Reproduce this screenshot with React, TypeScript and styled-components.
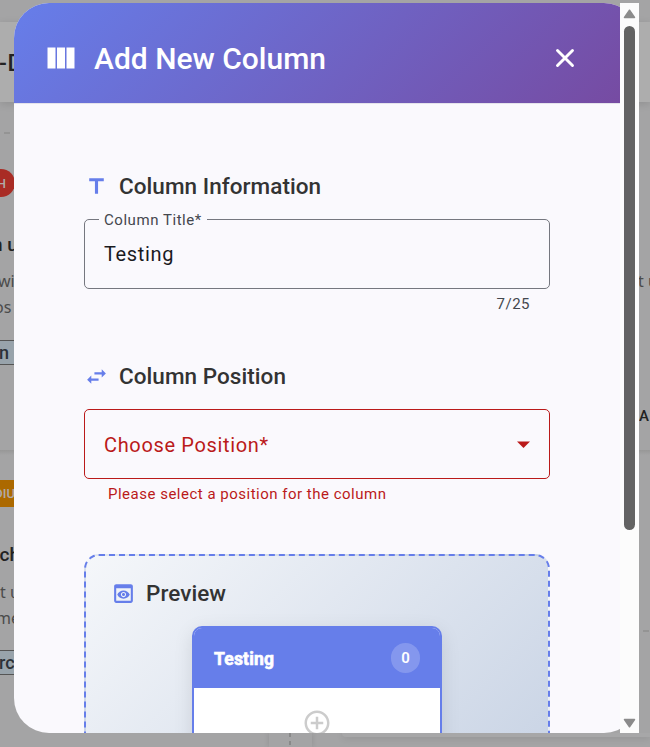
import React from "react";
import styled, { createGlobalStyle } from "styled-components";

const Global = createGlobalStyle`
  * { box-sizing: border-box; }
  body { margin: 0; overflow: hidden; background: #a4a4a5; font-family: Roboto, "Liberation Sans", sans-serif; }
`;

const Stage = styled.div`
  position: relative;
  width: 650px;
  height: 747px;
  overflow: hidden;
  padding: 3px 0 0 14px;
`;

/* Dimmed board behind the dialog */
const Board = styled.div`
  position: absolute;
  inset: 0;
  display: grid;
  grid-template-columns: 14px 625px 11px;
  grid-template-rows: 22px 80px 631px 14px;
  background: #a4a4a5;
`;
const Toolbar = styled.div`
  grid-column: 1 / -1;
  grid-row: 2;
  background: #adadad;
  box-shadow: 0 2px 8px rgba(0, 0, 0, 0.12);
  color: #232323;
  font-size: 23px;
  font-weight: 500;
  line-height: 83px;
  text-indent: -1px;
  letter-spacing: 0.6px;
  white-space: nowrap;
`;
const Strip = styled.div<{ $col: number }>`
  grid-column: ${(p) => p.$col};
  grid-row: 3;
  overflow: hidden;
  white-space: nowrap;
  display: flex;
  flex-direction: column;
`;
const Dash = styled.div<{ $top: number }>`
  flex: none;
  height: 2px;
  margin-top: ${(p) => p.$top}px;
  margin-left: 4px;
  width: 6px;
  background: #949494;
`;
const Tag = styled.div<{ $top: number; $round?: boolean }>`
  flex: none;
  align-self: flex-start;
  display: flex;
  justify-content: flex-end;
  align-items: center;
  margin-top: ${(p) => p.$top}px;
  width: ${(p) => (p.$round ? 15 : 20)}px;
  height: ${(p) => (p.$round ? 28 : 27)}px;
  padding-right: ${(p) => (p.$round ? 9 : 5)}px;
  border-radius: ${(p) => (p.$round ? "0 14px 14px 0" : "0")};
  background: ${(p) => (p.$round ? "#a92c25" : "#ac6900")};
  color: #b0aaa8;
  font-size: 13px;
  font-weight: 500;
`;
const Text = styled.div<{ $top: number; $size: number; $bold?: boolean; $shift?: number }>`
  flex: none;
  height: 26px;
  line-height: 26px;
  margin-top: ${(p) => p.$top}px;
  margin-left: ${(p) => p.$shift ?? 0}px;
  font-family: ${(p) => (p.$bold ? "Roboto" : '"Noto Sans"')}, sans-serif;
  font-size: ${(p) => p.$size}px;
  font-weight: ${(p) => (p.$bold ? 500 : 400)};
  color: ${(p) => (p.$bold ? "#222" : "#4b4b4b")};
`;
const Chip = styled(Text)`
  height: 25px;
  line-height: 23px;
  background: #98a3ab;
  border: solid #555;
  border-width: 1px 0;
  color: #2c3137;
`;
const Rule = styled.div<{ $top: number }>`
  flex: none;
  height: 5px;
  margin-top: ${(p) => p.$top}px;
  background: linear-gradient(#979797, #a4a4a5);
`;
const NextRow = styled.div`
  grid-column: 1 / -1;
  grid-row: 4;
  display: grid;
  grid-template-columns: 269px 43px 30px 1fr;
  overflow: hidden;
`;
const ColumnGap = styled.div`
  background: repeating-linear-gradient(#898989 0 4px, transparent 4px 8px) 20px 0 / 2px 100% no-repeat;
  box-shadow: -2px 0 4px rgba(0, 0, 0, 0.06), 2px 0 4px rgba(0, 0, 0, 0.06);
`;
const NextCard = styled.div`
  grid-column: 4;
  height: 4px;
  background: #a7a7a8;
  border-radius: 0 0 0 6px;
  box-shadow: 0 1px 7px rgba(0, 0, 0, 0.13);
`;

const Dialog = styled.div`
  position: relative;
  display: flex;
  width: 625px;
  height: 730px;
`;
const Surface = styled.section`
  width: 625px;
  height: 730px;
  padding-right: 19px;
  overflow: hidden;
  border-radius: 35px;
  background: #faf9fd;
`;
const Header = styled.header`
  display: flex;
  align-items: center;
  height: 100px;
  padding: 10px 39px 0 29px;
  color: #fff;
  background: linear-gradient(135deg, #667eea 0%, #764ba2 100%);
`;
const Title = styled.h1`
  flex: 1;
  margin: 2px 0 0 15px;
  font-size: 30px;
  font-weight: 500;
  line-height: 40px;
  white-space: nowrap;
`;
const CloseButton = styled.button`
  display: flex;
  align-items: center;
  justify-content: center;
  width: 32px;
  height: 32px;
  padding: 0;
  border: 0;
  background: none;
  color: #fff;
`;
const Body = styled.div`
  padding: 66px 70px 0;
  border-top: 1px solid #e4e3eb;
`;
const Heading = styled.h2`
  display: flex;
  align-items: center;
  gap: 10px;
  height: 33px;
  margin: 0;
  color: #333;
  font-size: 22.5px;
  font-weight: 500;
  white-space: nowrap;
  svg { color: #667eea; }
`;
const HeadingLabel = styled.span`
  padding-bottom: 2px;
  letter-spacing: 0.05px;
`;
const Field = styled.fieldset<{ $error?: boolean }>`
  display: flex;
  align-items: center;
  justify-content: space-between;
  min-width: 0;
  margin: 0;
  height: ${(p) => (p.$error ? 70 : 80)}px;
  padding: ${(p) => (p.$error ? "2px 19px 0" : "0 19px 10px")};
  border: 1px solid ${(p) => (p.$error ? "#ba1a1a" : "#75777f")};
  border-radius: 5px;
  color: ${(p) => (p.$error ? "#ba1a1a" : "#1a1b1f")};
  font-size: 20px;
  letter-spacing: 0.65px;
  line-height: 30px;
  svg { margin: -2px 0 0 0; }
`;
const Legend = styled.legend`
  height: 20px;
  margin-left: -5px;
  padding: 0 5px;
  color: #44474e;
  font-size: 15px;
  letter-spacing: 0.55px;
  line-height: 22px;
`;
const Hint = styled.div<{ $error?: boolean }>`
  height: 20px;
  margin-top: 5px;
  padding: ${(p) => (p.$error ? "0 24px" : "0 20px")};
  text-align: ${(p) => (p.$error ? "left" : "right")};
  color: ${(p) => (p.$error ? "#ba1a1a" : "#44474e")};
  font-size: 15px;
  letter-spacing: 0.5px;
  line-height: 20px;
`;
const Section = styled.section<{ $height: number }>`
  height: ${(p) => p.$height}px;
`;
const FieldSlot = styled.div<{ $top: number }>`
  margin-top: ${(p) => p.$top}px;
`;
const Preview = styled.section`
  height: 300px;
  padding: 21px 25px;
  border: 2px dashed #667eea;
  border-radius: 15px;
  background: linear-gradient(135deg, #f5f7fa 0%, #c3cfe2 100%);
`;
const Card = styled.div`
  width: 250px;
  height: 190px;
  margin: 16px auto 0;
  border: 2px solid #667eea;
  border-radius: 10px;
  overflow: hidden;
  background: #fff;
  box-shadow: 0 5px 19px rgba(0, 0, 0, 0.1);
`;
const CardHeader = styled.div`
  display: flex;
  align-items: center;
  justify-content: space-between;
  height: 60px;
  padding: 0 20px;
  color: #fff;
  background: #667eea;
`;
const CardTitle = styled.span`
  padding-top: 2px;
  font-size: 17.5px;
  font-weight: 700;
  letter-spacing: 0.2px;
  -webkit-text-stroke: 0.6px #fff;
`;
const Count = styled.span`
  display: flex;
  align-items: center;
  justify-content: center;
  width: 29px;
  height: 30px;
  border-radius: 15px;
  background: rgba(255, 255, 255, 0.2);
  font-size: 15px;
  font-weight: 600;
`;
const CardBody = styled.div`
  display: flex;
  justify-content: center;
  padding-top: 20px;
  color: #ccc;
`;
const Scrollbar = styled.div`
  position: absolute;
  right: 0;
  top: 0;
  display: flex;
  flex-direction: column;
  align-items: center;
  width: 19px;
  height: 730px;
  padding: 6px 0 5px;
  background: #fcfcfc;
  svg { flex: none; display: block; }
`;
const Thumb = styled.div`
  flex: none;
  width: 11px;
  height: 504px;
  margin: 7px 0 auto;
  border-radius: 6px;
  background: #636363;
`;

const paths = {
  columns: "M14.67 5v14H9.33V5h5.34zm1 14H21V5h-5.33v14zm-7.34 0V5H3v14h5.33z",
  title: "M5 4v3h5.5v12h3V7H19V4z",
  swap: "M6.99 11L3 15l3.99 4v-3H14v-2H6.99v-3zM21 9l-3.99-4v3H10v2h7.01v3L21 9z",
  preview:
    "M19 3H5c-1.11 0-2 .9-2 2v14c0 1.1.89 2 2 2h14c1.1 0 2-.9 2-2V5c0-1.1-.89-2-2-2zm0 16H5V7h14v12zm-5.5-6c0 .83-.67 1.5-1.5 1.5s-1.5-.67-1.5-1.5.67-1.5 1.5-1.5 1.5.67 1.5 1.5zM12 9c-2.73 0-5.06 1.66-6 4 .94 2.34 3.27 4 6 4s5.06-1.66 6-4c-.94-2.34-3.27-4-6-4zm0 6.5c-1.38 0-2.5-1.12-2.5-2.5s1.12-2.5 2.5-2.5 2.5 1.12 2.5 2.5-1.12 2.5-2.5 2.5z",
  add: "M13 7h-2v4H7v2h4v4h2v-4h4v-2h-4V7zm-1-5C6.48 2 2 6.48 2 12s4.48 10 10 10 10-4.48 10-10S17.52 2 12 2zm0 18c-4.41 0-8-3.59-8-8s3.59-8 8-8 8 3.59 8 8-3.59 8-8 8z",
};

function Icon({ name, size = 25 }: { name: keyof typeof paths; size?: number }) {
  return (
    <svg width={size} height={size} viewBox="0 0 24 24" fill="currentColor" aria-hidden="true">
      <path d={paths[name]} />
    </svg>
  );
}

export default function App() {
  return (
    <Stage>
      <Global />
      <Board aria-hidden="true">
        <Toolbar>-D</Toolbar>
        <Strip $col={1}>
          <Dash $top={30} />
          <Tag $top={35} $round>H</Tag>
          <Text $top={35} $size={19} $bold $shift={-8}>n u</Text>
          <Text $top={10} $size={16} $shift={-2}>wi</Text>
          <Text $top={0} $size={16} $shift={-6}>os</Text>
          <Chip $top={20} $size={18} $bold $shift={-1}>n</Chip>
          <Rule $top={85} />
          <Tag $top={25}>DIU</Tag>
          <Text $top={35} $size={19} $bold $shift={-7}>rch</Text>
          <Text $top={11} $size={16}>t u</Text>
          <Text $top={0} $size={16} $shift={-4}>me</Text>
          <Chip $top={19} $size={18} $bold $shift={-1}>rc</Chip>
        </Strip>
        <Strip $col={3}>
          <Text $top={166} $size={16} $shift={-1}>t u</Text>
          <Text $top={109} $size={15} $bold>A</Text>
          <Rule $top={21} />
          <Dash $top={175} />
        </Strip>
        <NextRow>
          <span />
          <ColumnGap />
          <span />
          <NextCard />
        </NextRow>
      </Board>
      <Dialog role="dialog">
        <Surface>
          <Header>
            <Icon name="columns" size={36} />
            <Title>Add New Column</Title>
            <CloseButton aria-label="Close">
              <svg width="20" height="20" viewBox="0 0 20 20" fill="none" stroke="currentColor" strokeWidth="2.9" strokeLinecap="round">
                <path d="M2.5 2.5l15 15M17.5 2.5l-15 15" />
              </svg>
            </CloseButton>
          </Header>
          <Body>
            <Section $height={190}>
              <Heading><Icon name="title" /><HeadingLabel>Column Information</HeadingLabel></Heading>
              <FieldSlot $top={6}>
                <Field>
                  <Legend>Column Title*</Legend>
                  Testing
                </Field>
                <Hint>7/25</Hint>
              </FieldSlot>
            </Section>
            <Section $height={194}>
              <Heading><Icon name="swap" /><HeadingLabel>Column Position</HeadingLabel></Heading>
              <FieldSlot $top={16}>
                <Field as="div" $error>
                  <span>Choose Position*</span>
                  <svg width="13" height="7" viewBox="0 0 13 7"><path d="M0 .5h13L6.5 7z" fill="#ba1a1a" /></svg>
                </Field>
                <Hint $error>Please select a position for the column</Hint>
              </FieldSlot>
            </Section>
            <Preview>
              <Heading><Icon name="preview" /><HeadingLabel>Preview</HeadingLabel></Heading>
              <Card>
                <CardHeader><CardTitle>Testing</CardTitle><Count>0</Count></CardHeader>
                <CardBody><Icon name="add" size={30} /></CardBody>
              </Card>
            </Preview>
          </Body>
        </Surface>
        <Scrollbar>
          <svg width="13" height="10" viewBox="0 0 13 10"><path d="M6.5 1.2l5 7.2h-10z" fill="#8b8b8b" stroke="#8b8b8b" strokeWidth="1.5" strokeLinejoin="round" /></svg>
          <Thumb />
          <svg width="13" height="10" viewBox="0 0 13 10"><path d="M6.5 8.8l5-7.2h-10z" fill="#8b8b8b" stroke="#8b8b8b" strokeWidth="1.5" strokeLinejoin="round" /></svg>
        </Scrollbar>
      </Dialog>
    </Stage>
  );
}
